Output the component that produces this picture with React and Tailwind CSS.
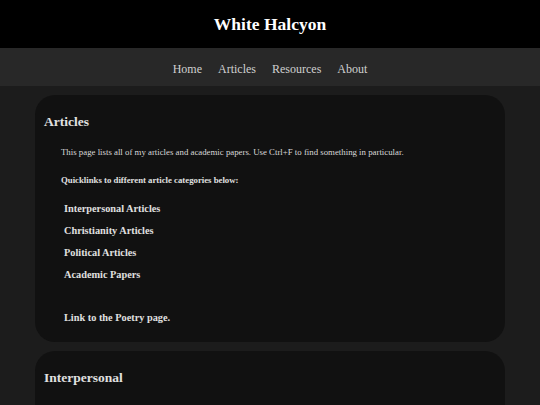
import React from 'react';

const quicklinks = ['Interpersonal Articles', 'Christianity Articles', 'Political Articles', 'Academic Papers'];

const App = () => {
  return (
    <div className="min-h-[405px] bg-[#1c1c1c] text-[#e0e0e0] font-['Liberation_Serif','Times_New_Roman',serif]">
      <header className="h-[48px] bg-black flex items-center justify-center">
        <h1 className="text-[17.5px] font-bold text-white">White Halcyon</h1>
      </header>
      <nav className="h-[38px] pt-[4px] bg-[#282828] flex items-center justify-center gap-[16px] text-[12px] text-[#d0d0d0]">
        <a>Home</a>
        <a>Articles</a>
        <a>Resources</a>
        <a>About</a>
      </nav>

      <main className="px-[35px] pt-[9px] flex flex-col gap-[9px]">
        <section className="bg-[#111111] rounded-[20px] px-[9px] pt-[18px] pb-[17px]">
          <h2 className="text-[13.5px] font-bold leading-[18px]">Articles</h2>
          <div className="pl-[17px] pt-[15px]">
            <p className="text-[8.8px] leading-[12px] text-[#d8d8d8]">
              This page lists all of my articles and academic papers. Use Ctrl+F to find something in particular.
            </p>
            <p className="text-[8.75px] leading-[12px] font-bold mt-[16px]">Quicklinks to different article categories below:</p>
            <ul className="pl-[3px] mt-[16px] flex flex-col gap-[8px]">
              {quicklinks.map((item) => (
                <li key={item} className="text-[10.3px] leading-[14px] font-bold">{item}</li>
              ))}
            </ul>
            <p className="pl-[3px] mt-[29px] text-[10.3px] leading-[14px] font-bold">Link to the Poetry page.</p>
          </div>
        </section>

        <section className="bg-[#111111] rounded-[20px] px-[9px] pt-[18px] pb-[40px]">
          <h2 className="text-[13.5px] font-bold leading-[18px]">Interpersonal</h2>
        </section>
      </main>
    </div>
  );
};

export default App;
